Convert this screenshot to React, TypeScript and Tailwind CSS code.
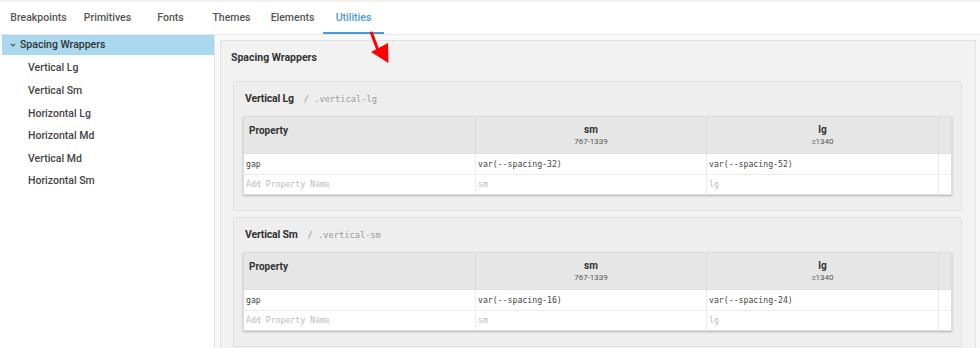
import React from 'react';

const tabs = [
  { label: 'Breakpoints', w: 'w-[73px]' },
  { label: 'Primitives', w: 'w-[65px]' },
  { label: 'Fonts', w: 'w-[61px]' },
  { label: 'Themes', w: 'w-[61px]' },
  { label: 'Elements', w: 'w-[61px]' },
  { label: 'Utilities', w: 'w-[61px]', active: true },
];

const navItems = ['Vertical Lg', 'Vertical Sm', 'Horizontal Lg', 'Horizontal Md', 'Vertical Md', 'Horizontal Sm'];

interface Wrapper {
  name: string;
  cls: string;
  sm: string;
  lg: string;
}

const wrappers: Wrapper[] = [
  { name: 'Vertical Lg', cls: '.vertical-lg', sm: 'var(--spacing-32)', lg: 'var(--spacing-52)' },
  { name: 'Vertical Sm', cls: '.vertical-sm', sm: 'var(--spacing-16)', lg: 'var(--spacing-24)' },
];

const mono = "font-['DejaVu_Sans_Mono','Liberation_Mono',monospace]";

const WrapperCard: React.FC<{ w: Wrapper }> = ({ w }) => (
  <div className="border border-[#e0e0e0] bg-[#eeeeee] rounded-[2px] px-[9px] pt-[9px] pb-[15px]">
    <div className="flex items-baseline h-[18px] pl-[2px]">
      <span className="text-[10.5px] font-bold text-[#333] tracking-[-0.2px]">{w.name}</span>
      <span className={`${mono} text-[8.7px] text-[#999] ml-[10px]`}>/ {w.cls}</span>
    </div>
    <div className="mt-[7px] bg-white border border-[#dcdcdc] shadow-[0_1px_2px_rgba(0,0,0,0.25)]">
      <div className="grid grid-cols-[232px_231px_232px_1fr] bg-[#e6e6e6] h-[37px] border-b border-[#e0e0e0]">
        <div className="pl-[5px] pt-[6px] text-[10px] font-bold text-[#333] border-r border-[#dadada]">Property</div>
        <div className="flex flex-col items-center pt-[6px] border-r border-[#dadada]">
          <span className="text-[10px] font-bold text-[#333] leading-[13px]">sm</span>
          <span className="text-[8px] text-[#555] leading-[12px]">767-1339</span>
        </div>
        <div className="flex flex-col items-center pt-[6px] border-r border-[#dadada]">
          <span className="text-[10px] font-bold text-[#333] leading-[13px]">lg</span>
          <span className="text-[8px] text-[#555] leading-[12px]">≥1340</span>
        </div>
        <div />
      </div>
      <div className={`grid grid-cols-[232px_231px_232px_1fr] h-[21px] items-stretch border-b border-[#ececec] ${mono} text-[8.2px] text-[#444]`}>
        <div className="pl-[2px] flex items-center border-r border-[#ececec]">gap</div>
        <div className="pl-[2px] flex items-center border-r border-[#ececec]">{w.sm}</div>
        <div className="pl-[2px] flex items-center border-r border-[#ececec]">{w.lg}</div>
        <div />
      </div>
      <div className={`grid grid-cols-[232px_231px_232px_1fr] h-[19px] items-stretch ${mono} text-[8.2px] text-[#bbb]`}>
        <div className="pl-[2px] flex items-center border-r border-[#ececec]">Add Property Name</div>
        <div className="pl-[2px] flex items-center border-r border-[#ececec]">sm</div>
        <div className="pl-[2px] flex items-center border-r border-[#ececec]">lg</div>
        <div />
      </div>
    </div>
  </div>
);

export default function App() {
  return (
    <div className="w-[980px] h-[348px] overflow-hidden bg-white font-['Roboto','Liberation_Sans',sans-serif] relative">
      <div className="h-[2px] bg-[#f2f2f2]" />
      {/* Tab bar */}
      <div className="h-[33px] flex pl-[2px] border-b border-[#e6e6e6]">
        {tabs.map((t) => (
          <div
            key={t.label}
            className={`${t.w} flex items-center justify-center text-[10.5px] font-medium ${
              t.active ? 'text-[#4a9bd6] border-b-[2px] border-[#4a9bd6] pt-[2px]' : 'text-[#555]'
            }`}
          >
            {t.label}
          </div>
        ))}
      </div>

      <div className="flex h-[313px]">
        {/* Sidebar */}
        <div className="w-[215px] shrink-0 border-r border-[#e4e4e4] pl-[2px]">
          <div className="h-[20px] bg-[#a9d8ef] flex items-center text-[10.5px] font-medium text-[#333]">
            <svg width="6" height="4" viewBox="0 0 6 4" className="ml-[8px] mr-[4px]">
              <path d="M0.8 0.8 L3 3 L5.2 0.8" fill="none" stroke="#555" strokeWidth="1.1" />
            </svg>
            Spacing Wrappers
          </div>
          <div className="flex flex-col pt-[2px]">
            {navItems.map((n) => (
              <div key={n} className="h-[22.6px] flex items-center pl-[26px] text-[10.5px] font-medium text-[#444]">
                {n}
              </div>
            ))}
          </div>
        </div>

        {/* Main */}
        <div className="flex-1 bg-[#f8f8f8] pl-[5px] pr-[4px] pt-[5px]">
          <div className="h-[330px] border border-[#e2e2e2] bg-[#f2f2f2] pl-[12px] pr-[13px]">
            <div className="h-[20px] mt-[7px] mb-[13px] flex items-center text-[10.5px] font-bold text-[#333] -ml-[2px]">
              Spacing Wrappers
            </div>
            <div className="flex flex-col gap-[6px]">
              {wrappers.map((w) => (
                <WrapperCard key={w.cls} w={w} />
              ))}
            </div>
          </div>
        </div>
      </div>

      {/* annotation arrow */}
      <svg className="absolute left-[364px] top-[28px]" width="32" height="40" viewBox="0 0 32 40">
        <path d="M7.5 5 L13.5 21" stroke="#ff0000" strokeWidth="3" strokeLinecap="round" fill="none" />
        <polygon points="7,24 24,15 24.5,35" fill="#ff0000" />
      </svg>
    </div>
  );
}
